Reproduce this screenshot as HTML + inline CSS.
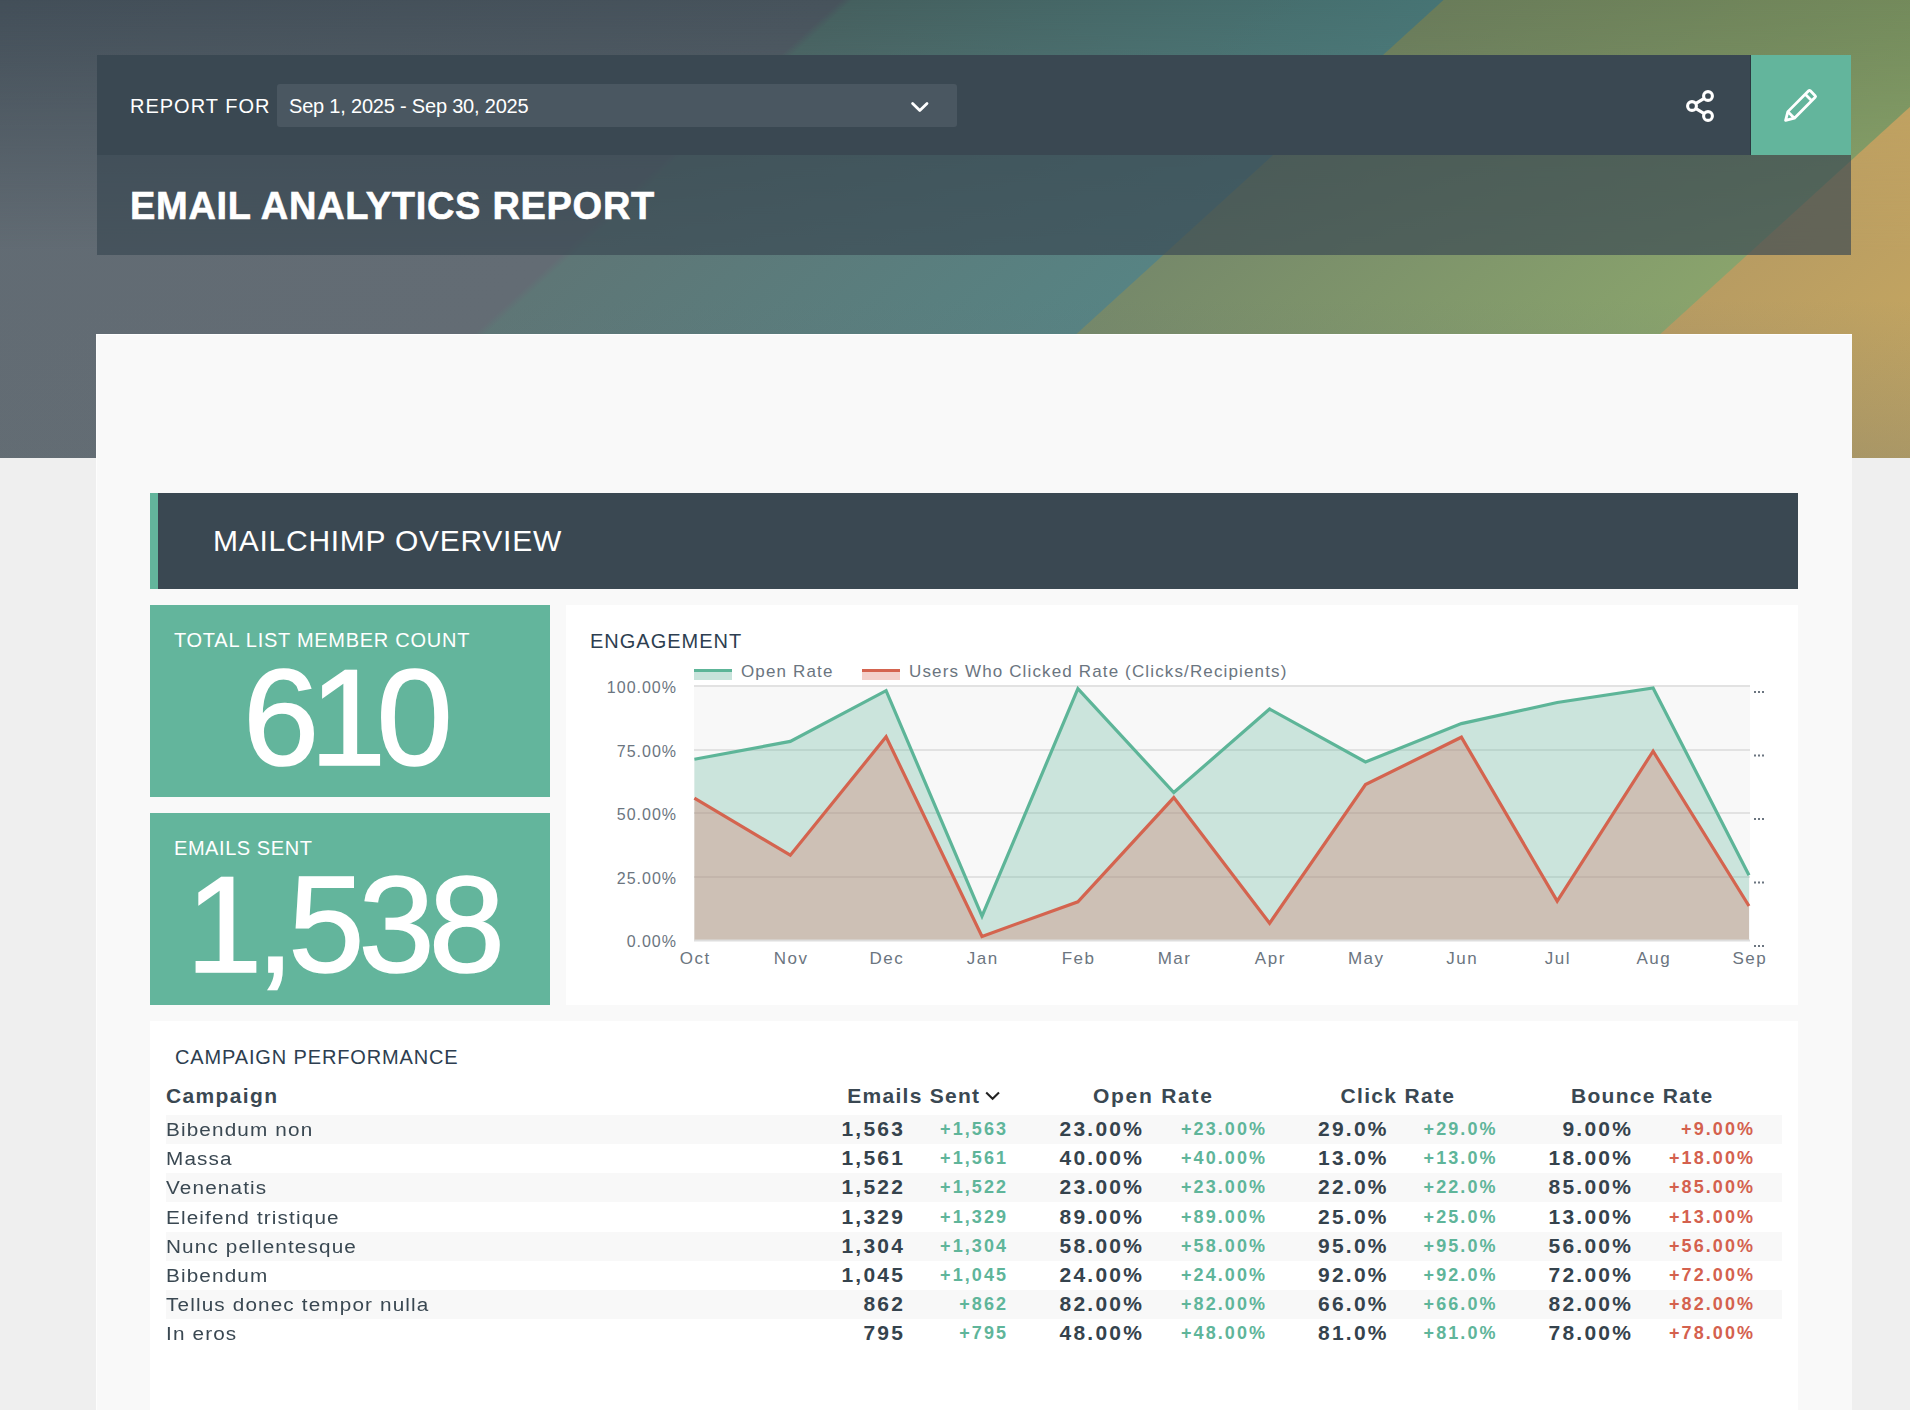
<!DOCTYPE html>
<html><head><meta charset="utf-8">
<style>
*{box-sizing:border-box;margin:0;padding:0}
html,body{width:1910px;height:1410px;overflow:hidden;background:#efefef;font-family:"Liberation Sans",sans-serif}
.abs{position:absolute}
.nw{white-space:nowrap}
#hdr,#hdr2,#hdr3{left:0;top:0;width:1910px;height:458px}
#hdr{background:linear-gradient(137.7deg, #434f59 0px, #47535c 566px, #45605f 574px, #477474 971px, #6a7c5a 972px, #768e5c 1364px, #c6a661 1365px, #cbaa62 1624px)}
#hdr2{background:linear-gradient(137.7deg, #616b73 0px, #636c74 566px, #5e7676 574px, #578383 971px, #76896a 972px, #89a36c 1364px, #b89c62 1365px, #c8a960 1624px);
-webkit-mask-image:linear-gradient(to bottom, transparent 0px, #000 250px);mask-image:linear-gradient(to bottom, transparent 0px, #000 250px)}
#hdr3{background:linear-gradient(to bottom, rgba(100,110,115,0) 300px, rgba(100,110,115,0.3) 458px)}
#bar{left:97px;top:55px;width:1654px;height:100px;background:#3a4852}
#edit{left:1751px;top:55px;width:100px;height:100px;background:#63b59c}
#tbar{left:97px;top:155px;width:1754px;height:100px;background:rgba(58,72,82,0.68)}
#rf{left:130px;top:94px;color:#fff;font-size:20px;line-height:24px;letter-spacing:1px}
#dd{left:277px;top:84px;width:680px;height:43px;background:#4a5761;border-radius:3px}
#ddt{left:289px;top:94px;color:#fff;font-size:20px;line-height:24px;letter-spacing:-0.2px}
#title{left:130px;top:184px;color:#fff;font-size:38px;line-height:44px;font-weight:bold;letter-spacing:0.7px;-webkit-text-stroke:0.6px #fff}
#cont{left:96px;top:334px;width:1756px;height:1076px;background:#f9f9f9;border-top:1px solid #fff;border-left:1px solid #fdfdfd}
#mc{left:150px;top:493px;width:1648px;height:96px;background:#3a4852;border-left:8px solid #63b59c}
#mct{left:213px;top:524px;color:#fff;font-size:30px;line-height:34px;letter-spacing:0.74px}
.kpi{left:150px;width:400px;height:192px;background:#63b59c}
.kl{left:174px;color:#fff;font-size:20px;line-height:24px;letter-spacing:1px}
.kv{color:#fff;font-size:137px;line-height:137px;-webkit-text-stroke:1.6px #fff}
#chart{left:566px;top:605px;width:1232px;height:400px;background:#fff}
#camp{left:150px;top:1021px;width:1648px;height:400px;background:#fff}
.ct{color:#2d3e50;font-size:20px;line-height:24px;letter-spacing:1px}
.lg{color:#6b7580;font-size:17px;line-height:20px;letter-spacing:1.14px}
.yl{left:576px;width:101px;text-align:right;color:#6b7580;font-size:16px;line-height:22px;letter-spacing:1.0px}
.xl{width:80px;text-align:center;color:#6b7580;font-size:17px;line-height:22px;letter-spacing:1.5px;padding-left:1.5px}
.th{color:#3a4852;font-size:21px;line-height:26px;font-weight:bold}
.tn{color:#3a4852;font-size:18px;line-height:24px;letter-spacing:1px;transform:scaleX(1.15);transform-origin:0 0}
.tv,.tg,.tr{width:200px;text-align:right;font-weight:bold;line-height:24px}
.tv{color:#35434d;font-size:21px;letter-spacing:2.25px}
.tg{color:#5fb59a;font-size:18px;letter-spacing:2.08px}
.tr{color:#d4614e;font-size:18px;letter-spacing:2.08px}
</style></head><body>
<div id="hdr" class="abs"></div><div id="hdr2" class="abs"></div><div id="hdr3" class="abs"></div>
<div id="bar" class="abs"></div>
<div id="edit" class="abs"></div>
<div id="tbar" class="abs"></div>
<div class="abs" style="left:1750px;top:55px;width:1px;height:100px;background:#2c3840"></div>
<div id="rf" class="abs nw">REPORT FOR</div>
<div id="dd" class="abs"></div>
<div id="ddt" class="abs nw">Sep 1, 2025 - Sep 30, 2025</div>
<div id="title" class="abs nw">EMAIL ANALYTICS REPORT</div>
<svg class="abs" style="left:0;top:0" width="1910" height="160" viewBox="0 0 1910 160"><path d="M912.6 103.4 L919.8 110.4 L927 103.4" fill="none" stroke="#fff" stroke-width="2.8" stroke-linecap="round" stroke-linejoin="round"/><g fill="none" stroke="#fff" stroke-width="3.1"><circle cx="1708" cy="96" r="4.4"/><circle cx="1692" cy="106" r="4.4"/><circle cx="1708" cy="116" r="4.4"/><path d="M1696 103.4 L1704.2 98.4 M1696 108.6 L1704.2 113.6"/></g><g transform="translate(1785.6,120.4) rotate(-45)" fill="none" stroke="#fff" stroke-width="2.8" stroke-linejoin="round"><path d="M0 0 L7.8 -4.6 L37.2 -4.6 Q38.4 -4.6 38.4 -3.4 L38.4 3.4 Q38.4 4.6 37.2 4.6 L7.8 4.6 Z M7.8 -4.6 L7.8 4.6 M32.4 -4.6 L32.4 4.6"/></g></svg>
<div id="cont" class="abs"></div>
<div id="mc" class="abs"></div>
<div id="mct" class="abs nw">MAILCHIMP OVERVIEW</div>
<div class="abs kpi" style="top:605px"></div>
<div class="abs kpi" style="top:813px"></div>
<div class="abs kl nw" style="top:628px;letter-spacing:0.73px">TOTAL LIST MEMBER COUNT</div>
<div class="abs kl nw" style="top:836px;letter-spacing:0.56px">EMAILS SENT</div>
<div class="abs kv nw" style="left:243px;top:649px;letter-spacing:-9.4px">610</div>
<div class="abs kv nw" style="left:186px;top:856px;letter-spacing:-6px">1,538</div>
<div id="chart" class="abs"></div>
<div class="abs ct nw" style="left:590px;top:628.5px">ENGAGEMENT</div>
<svg class="abs" style="left:0;top:0" width="1910" height="1010" viewBox="0 0 1910 1010">
<rect x="694" y="687" width="1056" height="253" fill="#f8f8f8"/>
<g fill="#e2e2e2"><rect x="694" y="685" width="1056" height="2"/><rect x="694" y="749" width="1056" height="2"/><rect x="694" y="812" width="1056" height="2"/><rect x="694" y="876" width="1056" height="2"/></g>
<polygon points="694.4,940 694.4,759.3 790.3,741.4 886.1,690.7 982.0,916.2 1077.9,688.7 1173.8,792.5 1269.6,709.0 1365.5,761.9 1461.4,723.6 1557.2,702.5 1653.1,687.9 1749.0,875.2 1749,940" fill="rgba(99,181,156,0.30)"/>
<polygon points="694.4,940 694.4,798.1 790.3,855.2 886.1,736.8 982.0,936.4 1077.9,901.8 1173.8,797.6 1269.6,923.2 1365.5,784.6 1461.4,737.2 1557.2,901.1 1653.1,751.2 1749.0,906.0 1749,940" fill="rgba(213,108,93,0.30)"/>
<polyline points="694.4,759.3 790.3,741.4 886.1,690.7 982.0,916.2 1077.9,688.7 1173.8,792.5 1269.6,709.0 1365.5,761.9 1461.4,723.6 1557.2,702.5 1653.1,687.9 1749.0,875.2" fill="none" stroke="#5db598" stroke-width="3.2"/>
<rect x="694" y="939.5" width="1056" height="2" fill="#dedede"/>
<polyline points="694.4,798.1 790.3,855.2 886.1,736.8 982.0,936.4 1077.9,901.8 1173.8,797.6 1269.6,923.2 1365.5,784.6 1461.4,737.2 1557.2,901.1 1653.1,751.2 1749.0,906.0" fill="none" stroke="#d4644f" stroke-width="3.2"/>
<rect x="694" y="669" width="38" height="3" fill="#5db598"/><rect x="694" y="672" width="38" height="8" fill="#c8e3db"/>
<rect x="862" y="669" width="38" height="3" fill="#d4644f"/><rect x="862" y="672" width="38" height="8" fill="#f3d0ca"/>
<g fill="#6b7580"><rect x="1754" y="691.0" width="2" height="2"/><rect x="1758" y="691.0" width="2" height="2"/><rect x="1762" y="691.0" width="2" height="2"/><rect x="1754" y="754.5" width="2" height="2"/><rect x="1758" y="754.5" width="2" height="2"/><rect x="1762" y="754.5" width="2" height="2"/><rect x="1754" y="818.0" width="2" height="2"/><rect x="1758" y="818.0" width="2" height="2"/><rect x="1762" y="818.0" width="2" height="2"/><rect x="1754" y="881.5" width="2" height="2"/><rect x="1758" y="881.5" width="2" height="2"/><rect x="1762" y="881.5" width="2" height="2"/><rect x="1754" y="945.0" width="2" height="2"/><rect x="1758" y="945.0" width="2" height="2"/><rect x="1762" y="945.0" width="2" height="2"/></g></svg>
<div class="abs lg nw" style="left:741px;top:662px">Open Rate</div>
<div class="abs lg nw" style="left:909px;top:662px">Users Who Clicked Rate (Clicks/Recipients)</div>
<div class="abs yl nw" style="top:677.0px">100.00%</div>
<div class="abs yl nw" style="top:740.5px">75.00%</div>
<div class="abs yl nw" style="top:804.0px">50.00%</div>
<div class="abs yl nw" style="top:867.5px">25.00%</div>
<div class="abs yl nw" style="top:931.0px">0.00%</div>
<div class="abs xl nw" style="left:654.4px;top:948px">Oct</div>
<div class="abs xl nw" style="left:750.3px;top:948px">Nov</div>
<div class="abs xl nw" style="left:846.1px;top:948px">Dec</div>
<div class="abs xl nw" style="left:942.0px;top:948px">Jan</div>
<div class="abs xl nw" style="left:1037.9px;top:948px">Feb</div>
<div class="abs xl nw" style="left:1133.8px;top:948px">Mar</div>
<div class="abs xl nw" style="left:1229.6px;top:948px">Apr</div>
<div class="abs xl nw" style="left:1325.5px;top:948px">May</div>
<div class="abs xl nw" style="left:1421.4px;top:948px">Jun</div>
<div class="abs xl nw" style="left:1517.2px;top:948px">Jul</div>
<div class="abs xl nw" style="left:1613.1px;top:948px">Aug</div>
<div class="abs xl nw" style="left:1709.0px;top:948px">Sep</div>
<div id="camp" class="abs"></div>
<div class="abs ct nw" style="left:175px;top:1045px;letter-spacing:0.86px">CAMPAIGN PERFORMANCE</div>
<div class="abs th nw" style="left:166px;top:1083px;letter-spacing:1.36px">Campaign</div>
<div class="abs th nw" style="left:779px;width:200px;text-align:right;top:1083px;letter-spacing:1.26px;margin-right:0"><span style="margin-right:-1.26px">Emails Sent</span></div>
<svg class="abs" style="left:984px;top:1090px" width="18" height="12" viewBox="0 0 18 12"><path d="M2.2 2.6 L8.6 8.8 L15 2.6" fill="none" stroke="#222" stroke-width="2.1"/></svg>
<div class="abs th nw" style="left:1053.3px;width:200px;text-align:center;top:1083px;letter-spacing:1.75px">Open Rate</div>
<div class="abs th nw" style="left:1297.9px;width:200px;text-align:center;top:1083px;letter-spacing:1.3px">Click Rate</div>
<div class="abs th nw" style="left:1542.2px;width:200px;text-align:center;top:1083px;letter-spacing:1.27px">Bounce Rate</div>
<div class="abs" style="left:166px;top:1115.00px;width:1616px;height:29.17px;background:#f8f8f8"></div>
<div class="abs tn nw" style="left:166px;top:1118.00px">Bibendum non</div>
<div class="abs tv nw" style="left:705.2px;top:1117.00px">1,563</div>
<div class="abs tg nw" style="left:808.1px;top:1117.00px">+1,563</div>
<div class="abs tv nw" style="left:944.2px;top:1117.00px">23.00%</div>
<div class="abs tg nw" style="left:1067.1px;top:1117.00px">+23.00%</div>
<div class="abs tv nw" style="left:1188.8px;top:1117.00px">29.0%</div>
<div class="abs tg nw" style="left:1297.6px;top:1117.00px">+29.0%</div>
<div class="abs tv nw" style="left:1433.2px;top:1117.00px">9.00%</div>
<div class="abs tr nw" style="left:1555.1px;top:1117.00px">+9.00%</div>
<div class="abs tn nw" style="left:166px;top:1147.17px">Massa</div>
<div class="abs tv nw" style="left:705.2px;top:1146.17px">1,561</div>
<div class="abs tg nw" style="left:808.1px;top:1146.17px">+1,561</div>
<div class="abs tv nw" style="left:944.2px;top:1146.17px">40.00%</div>
<div class="abs tg nw" style="left:1067.1px;top:1146.17px">+40.00%</div>
<div class="abs tv nw" style="left:1188.8px;top:1146.17px">13.0%</div>
<div class="abs tg nw" style="left:1297.6px;top:1146.17px">+13.0%</div>
<div class="abs tv nw" style="left:1433.2px;top:1146.17px">18.00%</div>
<div class="abs tr nw" style="left:1555.1px;top:1146.17px">+18.00%</div>
<div class="abs" style="left:166px;top:1173.34px;width:1616px;height:29.17px;background:#f8f8f8"></div>
<div class="abs tn nw" style="left:166px;top:1176.34px">Venenatis</div>
<div class="abs tv nw" style="left:705.2px;top:1175.34px">1,522</div>
<div class="abs tg nw" style="left:808.1px;top:1175.34px">+1,522</div>
<div class="abs tv nw" style="left:944.2px;top:1175.34px">23.00%</div>
<div class="abs tg nw" style="left:1067.1px;top:1175.34px">+23.00%</div>
<div class="abs tv nw" style="left:1188.8px;top:1175.34px">22.0%</div>
<div class="abs tg nw" style="left:1297.6px;top:1175.34px">+22.0%</div>
<div class="abs tv nw" style="left:1433.2px;top:1175.34px">85.00%</div>
<div class="abs tr nw" style="left:1555.1px;top:1175.34px">+85.00%</div>
<div class="abs tn nw" style="left:166px;top:1205.51px">Eleifend tristique</div>
<div class="abs tv nw" style="left:705.2px;top:1204.51px">1,329</div>
<div class="abs tg nw" style="left:808.1px;top:1204.51px">+1,329</div>
<div class="abs tv nw" style="left:944.2px;top:1204.51px">89.00%</div>
<div class="abs tg nw" style="left:1067.1px;top:1204.51px">+89.00%</div>
<div class="abs tv nw" style="left:1188.8px;top:1204.51px">25.0%</div>
<div class="abs tg nw" style="left:1297.6px;top:1204.51px">+25.0%</div>
<div class="abs tv nw" style="left:1433.2px;top:1204.51px">13.00%</div>
<div class="abs tr nw" style="left:1555.1px;top:1204.51px">+13.00%</div>
<div class="abs" style="left:166px;top:1231.68px;width:1616px;height:29.17px;background:#f8f8f8"></div>
<div class="abs tn nw" style="left:166px;top:1234.68px">Nunc pellentesque</div>
<div class="abs tv nw" style="left:705.2px;top:1233.68px">1,304</div>
<div class="abs tg nw" style="left:808.1px;top:1233.68px">+1,304</div>
<div class="abs tv nw" style="left:944.2px;top:1233.68px">58.00%</div>
<div class="abs tg nw" style="left:1067.1px;top:1233.68px">+58.00%</div>
<div class="abs tv nw" style="left:1188.8px;top:1233.68px">95.0%</div>
<div class="abs tg nw" style="left:1297.6px;top:1233.68px">+95.0%</div>
<div class="abs tv nw" style="left:1433.2px;top:1233.68px">56.00%</div>
<div class="abs tr nw" style="left:1555.1px;top:1233.68px">+56.00%</div>
<div class="abs tn nw" style="left:166px;top:1263.85px">Bibendum</div>
<div class="abs tv nw" style="left:705.2px;top:1262.85px">1,045</div>
<div class="abs tg nw" style="left:808.1px;top:1262.85px">+1,045</div>
<div class="abs tv nw" style="left:944.2px;top:1262.85px">24.00%</div>
<div class="abs tg nw" style="left:1067.1px;top:1262.85px">+24.00%</div>
<div class="abs tv nw" style="left:1188.8px;top:1262.85px">92.0%</div>
<div class="abs tg nw" style="left:1297.6px;top:1262.85px">+92.0%</div>
<div class="abs tv nw" style="left:1433.2px;top:1262.85px">72.00%</div>
<div class="abs tr nw" style="left:1555.1px;top:1262.85px">+72.00%</div>
<div class="abs" style="left:166px;top:1290.02px;width:1616px;height:29.17px;background:#f8f8f8"></div>
<div class="abs tn nw" style="left:166px;top:1293.02px">Tellus donec tempor nulla</div>
<div class="abs tv nw" style="left:705.2px;top:1292.02px">862</div>
<div class="abs tg nw" style="left:808.1px;top:1292.02px">+862</div>
<div class="abs tv nw" style="left:944.2px;top:1292.02px">82.00%</div>
<div class="abs tg nw" style="left:1067.1px;top:1292.02px">+82.00%</div>
<div class="abs tv nw" style="left:1188.8px;top:1292.02px">66.0%</div>
<div class="abs tg nw" style="left:1297.6px;top:1292.02px">+66.0%</div>
<div class="abs tv nw" style="left:1433.2px;top:1292.02px">82.00%</div>
<div class="abs tr nw" style="left:1555.1px;top:1292.02px">+82.00%</div>
<div class="abs tn nw" style="left:166px;top:1322.19px">In eros</div>
<div class="abs tv nw" style="left:705.2px;top:1321.19px">795</div>
<div class="abs tg nw" style="left:808.1px;top:1321.19px">+795</div>
<div class="abs tv nw" style="left:944.2px;top:1321.19px">48.00%</div>
<div class="abs tg nw" style="left:1067.1px;top:1321.19px">+48.00%</div>
<div class="abs tv nw" style="left:1188.8px;top:1321.19px">81.0%</div>
<div class="abs tg nw" style="left:1297.6px;top:1321.19px">+81.0%</div>
<div class="abs tv nw" style="left:1433.2px;top:1321.19px">78.00%</div>
<div class="abs tr nw" style="left:1555.1px;top:1321.19px">+78.00%</div>
</body></html>
